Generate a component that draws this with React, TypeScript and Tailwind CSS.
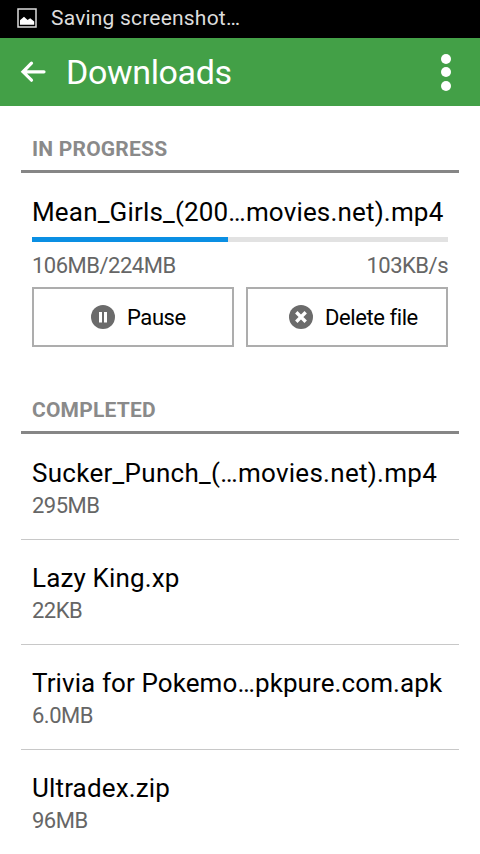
import type { ReactNode } from "react";
import { clsx } from "clsx";

interface DownloadedFile {
  name: string;
  size: string;
  tracking: string;
}

const completed: DownloadedFile[] = [
  { name: "Sucker_Punch_(…movies.net).mp4", size: "295MB", tracking: "tracking-[0.28px]" },
  { name: "Lazy King.xp", size: "22KB", tracking: "tracking-[0.15px]" },
  { name: "Trivia for Pokemo…pkpure.com.apk", size: "6.0MB", tracking: "tracking-[0.1px]" },
  { name: "Ultradex.zip", size: "96MB", tracking: "tracking-[0.15px]" },
];

function StatusBar() {
  return (
    <div className="flex h-[38px] items-center bg-black pl-[17px] text-[#dcdcdc]">
      <svg width="20" height="20" viewBox="0 0 20 20" className="mb-[2px] shrink-0">
        <rect x="1" y="1" width="18" height="18" fill="none" stroke="currentColor" strokeWidth="1.5" />
        <path d="M3 16.8v-4.5l4-3.6 3.6 3.4 2.6-1.8 4 3.2v3.3z" fill="#fff" />
      </svg>
      <span className="mb-[2px] ml-[14px] text-[21px] leading-[36px] tracking-[0.2px]">Saving screenshot…</span>
    </div>
  );
}

function Header() {
  return (
    <header className="flex h-[68px] items-center bg-[#43a047] pr-[29px] pl-[20px] text-white">
      <svg
        width="28"
        height="24"
        viewBox="0 0 28 24"
        fill="none"
        stroke="currentColor"
        strokeWidth="3.2"
        strokeLinecap="round"
      >
        <path d="M11.5 3.2 3 11.8l8.5 8.4M3 11.8h21" />
      </svg>
      <h1 className="ml-[18px] text-[34px] leading-[68px] tracking-[-0.35px]">Downloads</h1>
      <button aria-label="More options" className="ml-auto flex flex-col gap-[3.5px]">
        <span className="size-[10px] rounded-full bg-white" />
        <span className="size-[10px] rounded-full bg-white" />
        <span className="size-[10px] rounded-full bg-white" />
      </button>
    </header>
  );
}

function SectionTitle({ children, className }: { children: ReactNode; className: string }) {
  return (
    <h2
      className={clsx(
        "border-b-3 border-[#868686] pl-[11px] text-[21px] leading-[42px] font-bold tracking-[0.2px] text-[#8a8a8a]",
        className,
      )}
    >
      {children}
    </h2>
  );
}

function ActionButton({ icon, label, className }: { icon: ReactNode; label: string; className: string }) {
  return (
    <button
      className={clsx(
        "flex h-[60px] w-[202px] items-center border-2 border-[#adadad] text-[22px] tracking-[-0.42px] text-black",
        className,
      )}
    >
      {icon}
      <span className="ml-[12px] whitespace-nowrap">{label}</span>
    </button>
  );
}

export default function App() {
  return (
    <div className="h-[854px] w-[480px] overflow-hidden bg-white font-[Roboto,sans-serif] text-black">
      <StatusBar />
      <Header />

      <main className="px-[21px] pt-[22px]">
        <SectionTitle className="h-[45px]">IN PROGRESS</SectionTitle>
        <div className="px-[11px] pt-[20px]">
          <p className="h-[44px] text-[26px] leading-[38px] tracking-[0.17px] whitespace-nowrap">
            Mean_Girls_(200…movies.net).mp4
          </p>
          <div className="h-[5px] bg-[#e2e2e2]">
            <div className="h-full w-[196px] bg-[#0a8fe3]" />
          </div>
          <div className="flex h-[45px] justify-between text-[22px] leading-[47px] tracking-[-0.5px] text-[#666]">
            <span>106MB/224MB</span>
            <span>103KB/s</span>
          </div>
          <div className="flex gap-3">
            <ActionButton
              label="Pause"
              className="pl-[57px]"
              icon={
                <svg width="24" height="24" viewBox="0 0 24 24">
                  <circle cx="12" cy="12" r="12" fill="#6b6b6b" />
                  <path d="M9.5 7v10.5M14.5 7v10.5" stroke="#fff" strokeWidth="3" />
                </svg>
              }
            />
            <ActionButton
              label="Delete file"
              className="pl-[41px]"
              icon={
                <svg width="24" height="24" viewBox="0 0 24 24">
                  <circle cx="12" cy="12" r="12" fill="#6b6b6b" />
                  <path d="m7.3 7.3 9.4 9.4M16.7 7.3l-9.4 9.4" stroke="#fff" strokeWidth="3.4" />
                </svg>
              }
            />
          </div>
        </div>

        <SectionTitle className="mt-[42px] h-[45px]">COMPLETED</SectionTitle>
        <ul className="pt-px">
          {completed.map((file) => (
            <li key={file.name} className="h-[105px] border-b border-[#c8c8c8] px-[11px] pt-[19px] last:border-0">
              <p className={clsx("text-[26px] leading-[38px] whitespace-nowrap", file.tracking)}>{file.name}</p>
              <p className="text-[22px] leading-[28px] tracking-[-0.5px] text-[#666]">{file.size}</p>
            </li>
          ))}
        </ul>
      </main>
    </div>
  );
}
